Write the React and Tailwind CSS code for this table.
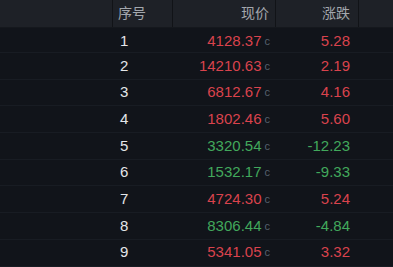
const rows = [
  { no: 1, price: "4128.37", chg: "5.28", up: true },
  { no: 2, price: "14210.63", chg: "2.19", up: true },
  { no: 3, price: "6812.67", chg: "4.16", up: true },
  { no: 4, price: "1802.46", chg: "5.60", up: true },
  { no: 5, price: "3320.54", chg: "-12.23", up: false },
  { no: 6, price: "1532.17", chg: "-9.33", up: false },
  { no: 7, price: "4724.30", chg: "5.24", up: true },
  { no: 8, price: "8306.44", chg: "-4.84", up: false },
  { no: 9, price: "5341.05", chg: "3.32", up: true },
];

const cols = "grid grid-cols-[113px_60px_103px_83px_1fr]";

export default function App() {
  return (
    <div
      className="w-[393px] h-[267px] overflow-hidden bg-[#11141a] text-[15px]"
      style={{ fontFamily: '"Liberation Sans", "Noto Sans CJK SC", sans-serif' }}
    >
      <div className={`${cols} h-[28px] bg-[#1e2127] text-[#a3a7ad] text-[14px] border-b border-[#15181d]`}>
        <div className="border-r border-[#111317]" />
        <div className="border-r border-[#111317] flex items-center pl-[5px]">序号</div>
        <div className="border-r border-[#111317] flex items-center justify-end pr-[6px]">现价</div>
        <div className="border-r border-[#111317] flex items-center justify-end pr-[8px]">涨跌</div>
        <div />
      </div>
      {rows.map((r) => (
        <div
          key={r.no}
          className={`${cols} ${r.no === 1 ? "h-[25px] pt-[2px]" : "h-[26.7px]"} border-b border-[#181c23]`}
        >
          <div />
          <div className="flex items-center pl-[7px] text-[#e4e6e9]">{r.no}</div>
          <div className={`flex items-center justify-end pr-[6px] ${r.up ? "text-[#d9434d]" : "text-[#42a85c]"}`}>
            {r.price}
            <span className="ml-[3px] text-[11px] text-[#56616d]">c</span>
          </div>
          <div className={`flex items-center justify-end pr-[9px] ${r.up ? "text-[#d9434d]" : "text-[#42a85c]"}`}>
            {r.chg}
          </div>
          <div />
        </div>
      ))}
    </div>
  );
}
